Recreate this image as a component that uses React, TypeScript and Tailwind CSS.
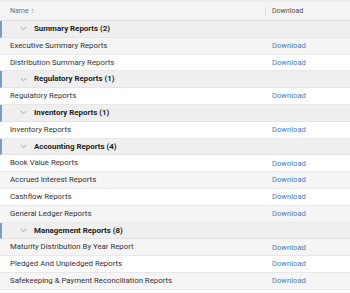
import React from "react";

type Row =
  | { kind: "group"; label: string }
  | { kind: "item"; label: string };

const rows: Row[] = [
  { kind: "group", label: "Summary Reports (2)" },
  { kind: "item", label: "Executive Summary Reports" },
  { kind: "item", label: "Distribution Summary Reports" },
  { kind: "group", label: "Regulatory Reports (1)" },
  { kind: "item", label: "Regulatory Reports" },
  { kind: "group", label: "Inventory Reports (1)" },
  { kind: "item", label: "Inventory Reports" },
  { kind: "group", label: "Accounting Reports (4)" },
  { kind: "item", label: "Book Value Reports" },
  { kind: "item", label: "Accrued Interest Reports" },
  { kind: "item", label: "Cashflow Reports" },
  { kind: "item", label: "General Ledger Reports" },
  { kind: "group", label: "Management Reports (8)" },
  { kind: "item", label: "Maturity Distribution By Year Report" },
  { kind: "item", label: "Pledged And Unpledged Reports" },
  { kind: "item", label: "Safekeeping & Payment Reconciliation Reports" },
];

function Chevron() {
  return (
    <svg width="7" height="5" viewBox="0 0 7 5" className="shrink-0">
      <path d="M0.8 1 L3.5 3.8 L6.2 1" fill="none" stroke="#9a9a9a" strokeWidth="0.9" />
    </svg>
  );
}

export default function App() {
  return (
    <div
      className="w-[350px] h-[293px] bg-white overflow-hidden"
      style={{ fontFamily: "Roboto, 'Liberation Sans', sans-serif" }}
    >
      <div className="flex h-[21px] items-center bg-[#f4f4f4] border-t-[2px] border-t-[#ececec] border-b border-b-[#dedede]">
        <div className="flex-1 pl-[10px] text-[7px] text-[#707070]">Name ↑</div>
        <div className="w-[85px] flex items-center h-full">
          <div className="w-px h-[8px] bg-[#dcdcdc]" />
          <div className="pl-[6px] text-[7px] text-[#505050]">Download</div>
        </div>
      </div>
      {rows.map((r, i) =>
        r.kind === "group" ? (
          <div
            key={i}
            className="flex h-[16.8px] items-center bg-[#efefef] border-b border-b-[#e4e4e4] border-l-[2px] border-l-[#7d9cba]"
          >
            <div className="pl-[18px] pr-[7px] flex items-center">
              <Chevron />
            </div>
            <div className="text-[7.9px] font-bold text-[#222]">{r.label}</div>
          </div>
        ) : (
          <div
            key={i}
            className={`flex h-[16.8px] items-center border-b border-b-[#e8e8e8] ${
              i % 2 === 1 ? "bg-[#f5f5f5]" : "bg-white"
            }`}
          >
            <div className="flex-1 pl-[10px] text-[7.8px] text-[#333] whitespace-nowrap">{r.label}</div>
            <div className="w-[85px] pl-[7px] text-[7.6px] text-[#4a7db3]">Download</div>
          </div>
        )
      )}
    </div>
  );
}
